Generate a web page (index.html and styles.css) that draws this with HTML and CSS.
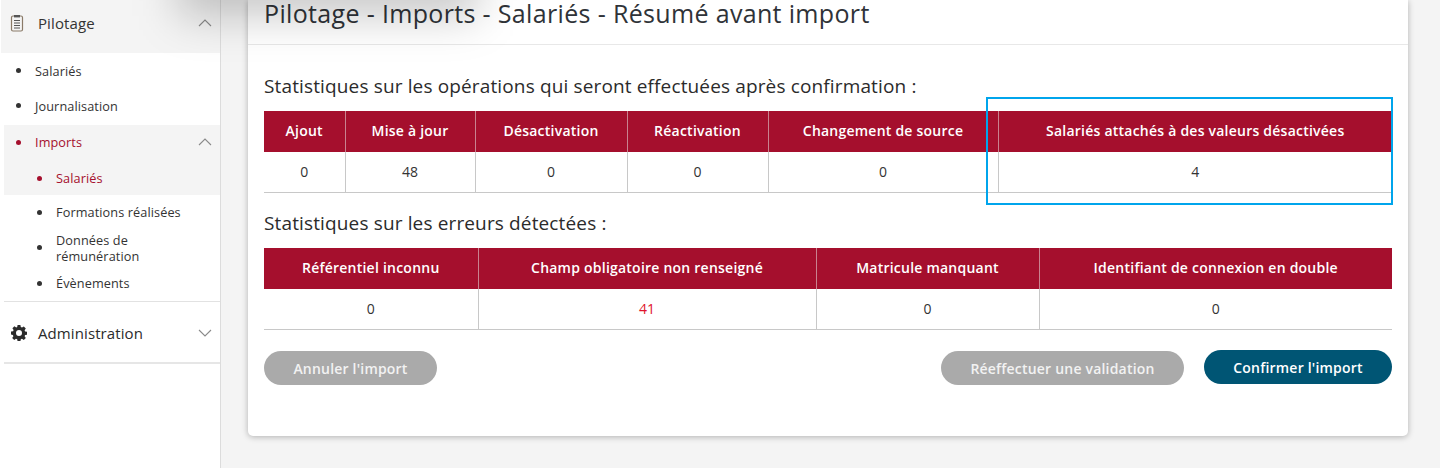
FILE: index.html
```html
<!DOCTYPE html>
<html lang="fr">
<head>
<meta charset="utf-8">
<title>Résumé avant import</title>
<link rel="stylesheet" href="styles.css">
</head>
<body>
<div class="page">
  <aside class="sidebar">
    <div class="nav-head nav-head-open">
      <svg class="nav-icon" width="16" height="18" viewBox="0 0 16 18" fill="none"><rect x="2.500" y="2" width="11" height="15" rx="1.500" stroke="#8a7a68" stroke-width="1.200"/><rect x="5" y="1" width="6" height="2.400" fill="#555"/><path d="M5 6.500h6M5 9h6M5 11.500h6M5 14h6" stroke="#555" stroke-width="1"/></svg>
      <span class="nav-label">Pilotage</span>
      <svg class="chev" width="14" height="8" viewBox="0 0 14 8" fill="none"><path d="M1 7l6-6 6 6" stroke="#8a8a8a" stroke-width="1.100"/></svg>
    </div>
    <ul class="nav-list">
      <li class="item lvl1 r36"><span class="dot"></span>Salariés</li>
      <li class="item lvl1 r36 nudge-up"><span class="dot"></span>Journalisation</li>
      <li class="item lvl1 r35 active shaded"><span class="dot"></span>Imports
        <svg class="chev" width="14" height="8" viewBox="0 0 14 8" fill="none"><path d="M1 7l6-6 6 6" stroke="#8a8a8a" stroke-width="1.100"/></svg>
      </li>
      <li class="item lvl2 r35 active shaded nudge-down"><span class="dot"></span>Salariés</li>
      <li class="item lvl2 r35"><span class="dot"></span>Formations réalisées</li>
      <li class="item lvl2 r36"><span class="dot"></span><span class="wrap">Données de rémunération</span></li>
      <li class="item lvl2 r35"><span class="dot"></span>Évènements</li>
    </ul>
    <div class="nav-head nav-head-closed">
      <svg class="nav-icon gear" width="16" height="16" viewBox="0 0 16 16"><path fill="#2b2b2b" fill-rule="evenodd" d="M6.600 0h2.800l.4 2.100 1.200.5 1.800-1.200 2 2-1.200 1.800.5 1.200 2.100.4v2.800l-2.100.4-.5 1.200 1.200 1.800-2 2-1.800-1.200-1.200.5-.4 2.100H6.600l-.4-2.100-1.200-.5-1.800 1.200-2-2 1.200-1.800-.5-1.200L0 9.400V6.600l2.100-.4.5-1.200L1.400 3.200l2-2L5.200 2.400l1-.3zM8 5a3 3 0 1 0 0 6 3 3 0 0 0 0-6z"/></svg>
      <span class="nav-label">Administration</span>
      <svg class="chev" width="14" height="8" viewBox="0 0 14 8" fill="none"><path d="M1 1l6 6 6-6" stroke="#8a8a8a" stroke-width="1.100"/></svg>
    </div>
  </aside>
  <main class="main">
    <section class="card">
      <header class="card-head">
        <h1>Pilotage - Imports - Salariés - Résumé avant import</h1>
      </header>
      <div class="card-body">
        <h2 class="h-first">Statistiques sur les opérations qui seront effectuées après confirmation :</h2>
        <div class="table-wrap">
          <table>
            <colgroup><col class="a1"><col class="a2"><col class="a3"><col class="a4"><col class="a5"><col class="a6"></colgroup>
            <thead><tr><th>Ajout</th><th>Mise à jour</th><th>Désactivation</th><th>Réactivation</th><th>Changement de source</th><th>Salariés attachés à des valeurs désactivées</th></tr></thead>
            <tbody><tr><td>0</td><td>48</td><td>0</td><td>0</td><td>0</td><td>4</td></tr></tbody>
          </table>
          <div class="highlight"></div>
        </div>
        <h2 class="h-second">Statistiques sur les erreurs détectées :</h2>
        <table class="tall">
          <colgroup><col class="b1"><col class="b2"><col class="b3"><col class="b4"></colgroup>
          <thead><tr><th>Référentiel inconnu</th><th>Champ obligatoire non renseigné</th><th>Matricule manquant</th><th>Identifiant de connexion en double</th></tr></thead>
          <tbody><tr><td>0</td><td class="err">41</td><td>0</td><td>0</td></tr></tbody>
        </table>
        <div class="actions">
          <button class="btn btn-off btn-cancel">Annuler l'import</button>
          <div class="actions-right">
            <button class="btn btn-off btn-redo">Réeffectuer une validation</button>
            <button class="btn btn-primary">Confirmer l'import</button>
          </div>
        </div>
      </div>
      <div class="top-shade"></div>
    </section>
  </main>
</div>
</body>
</html>
```
FILE: styles.css
```css
* { box-sizing: border-box; }
html, body { margin: 0; height: 100%; overflow: hidden; }
body { font-family: "Open Sans", "Noto Sans", sans-serif; color: #333; background: #f4f4f4; }
.page { display: flex; height: 468px; }

.sidebar { width: 221px; flex: none; background: #fff; border-right: 1px solid #dcdcdc; padding-left: 4px; }
.nav-head { display: flex; align-items: center; font-size: 15px; letter-spacing: .1px; }
.nav-head-open { height: 53px; background: #f4f4f4; margin-left: -3px; padding: 0 8px 8px 8px; }
.nav-head-closed { height: 63px; border-top: 1px solid #e2e2e2; border-bottom: 2px solid #e6e6e6; padding: 1px 8px 0 7px; color: #2b2b2b; }
.nav-icon { flex: none; margin-right: 13px; }
.gear { margin-right: 11px; }
.nav-label { flex: 1; }
.chev { flex: none; }
.nav-list { list-style: none; margin: 0; padding: 0; font-size: 12.7px; letter-spacing: .1px; }
.item { display: flex; align-items: center; padding: 0 8px 1px 0; color: #333; }
.lvl1 { padding-left: 12px; }
.lvl2 { padding-left: 33px; }
.r36 { height: 36px; }
.r35 { height: 35px; }
.nudge-up { padding-bottom: 3px; }
.nudge-down { padding-bottom: 0; padding-top: 1px; }
.dot { flex: none; width: 5px; height: 5px; border-radius: 50%; background: #333; margin-right: 14px; }
.wrap { width: 110px; line-height: 16px; }
.shaded { background: #f4f4f4; }
.active { color: #a50f2d; }
.active .dot { background: #a50f2d; }
.item .chev { margin-left: auto; }

.main { flex: 1; padding-left: 27px; }
.card { position: relative; width: 1160px; height: 436px; background: #fff; border-radius: 0 0 5px 5px; box-shadow: 0 1px 6px rgba(0,0,0,.28); }
.card-head { height: 45px; border-bottom: 1px solid #e8e8e8; padding: 0 16px; }
h1 { margin: 0; font-size: 25px; font-weight: 400; line-height: 27px; color: #2f3338; letter-spacing: .34px; }
.card-body { padding: 0 16px; }
h2 { margin: 0; font-size: 19px; font-weight: 400; line-height: 24px; color: #2b2b2b; letter-spacing: .14px; }
.h-first { padding-top: 29px; height: 66px; }
.h-second { height: 55px; padding-top: 18px; }
.table-wrap { position: relative; }
table { width: 1128px; border-collapse: collapse; table-layout: fixed; font-size: 14px; }
th { height: 41px; padding: 0 0 2px; background: #a50f2d; color: #fff; font-weight: 600; letter-spacing: .23px; border-left: 1px solid #c9828f; }
th:first-child, td:first-child { border-left: 0; }
td { height: 40px; padding: 0; text-align: center; font-size: 14px; border-left: 1px solid #c8c8c8; border-bottom: 1px solid #c8c8c8; }
.tall td { height: 41px; padding-bottom: 1px; }
.err { color: #e0132c; }
.a1 { width: 81px; } .a2 { width: 130px; } .a3 { width: 152px; } .a4 { width: 141px; } .a5 { width: 230px; } .a6 { width: 394px; }
.b1 { width: 214px; } .b2 { width: 338px; } .b3 { width: 223px; } .b4 { width: 353px; }
.highlight { position: absolute; left: 722px; top: -14px; width: 407px; height: 108px; border: 2px solid #00a5ec; pointer-events: none; }
.actions { display: flex; justify-content: space-between; align-items: flex-start; margin-top: 20px; }
.actions-right { display: flex; gap: 20px; align-items: flex-start; }
.btn { height: 34px; border: 0; border-radius: 17px; font: 600 14px "Open Sans", sans-serif; color: #fff; letter-spacing: .2px; padding: 0; }
.btn-off { background: #aaa; color: #f2f2f2; margin-top: 1px; }
.btn-cancel { width: 173px; }
.btn-redo { width: 243px; }
.btn-primary { width: 188px; background: #005574; }
.top-shade { position: absolute; left: -70px; top: -44px; width: 300px; height: 60px; background: rgba(0,0,0,.22); filter: blur(22px); pointer-events: none; }
```
